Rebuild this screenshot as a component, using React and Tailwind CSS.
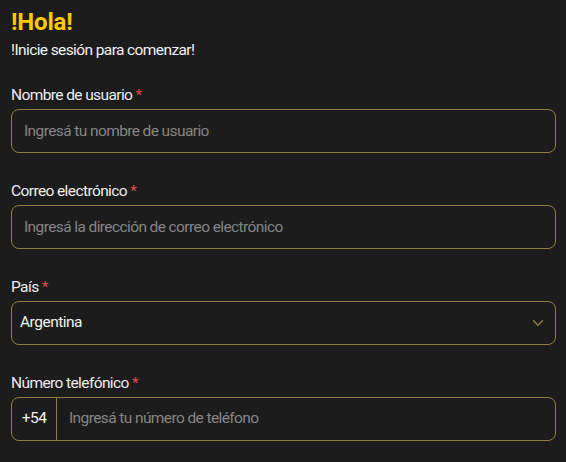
import React, { useState } from 'react';
import { ChevronDown } from 'lucide-react';

const Label = ({ children }) => (
  <label className="block text-[15.5px] leading-[20px] tracking-[-0.6px] text-[#ececec] mb-[4px]">
    {children} <span className="text-[#e5484d]">*</span>
  </label>
);

const inputBox = 'w-full h-[44px] rounded-[8px] border border-[#8c7f3f] bg-transparent';
const field = 'text-[15.5px] tracking-[-0.6px] text-white placeholder:text-[#858585] outline-none';

export default function App() {
  const [country, setCountry] = useState('Argentina');

  return (
    <div className="min-h-[462px] bg-[#1c1c1c] pl-[11px] pr-[10px] pt-[6px] font-['Roboto',sans-serif]">
      <h1 className="text-[24px] leading-[32px] font-bold tracking-[-0.2px] text-[#fcc800]">!Hola!</h1>
      <p className="text-[15.5px] leading-[20px] tracking-[-0.6px] text-[#f2f2f2] mt-[2px]">!Inicie sesión para comenzar!</p>

      <div className="mt-[25px] flex flex-col gap-[28px]">
        <div>
          <Label>Nombre de usuario</Label>
          <input className={`${inputBox} px-[12px] ${field}`} placeholder="Ingresá tu nombre de usuario" />
        </div>

        <div>
          <Label>Correo electrónico</Label>
          <input className={`${inputBox} px-[12px] ${field}`} placeholder="Ingresá la dirección de correo electrónico" />
        </div>

        <div>
          <Label>País</Label>
          <div className={`${inputBox} flex items-center justify-between pl-[8px] pr-[8px]`}>
            <span className="text-[15.5px] tracking-[-0.5px] text-[#f2f2f2]">{country}</span>
            <ChevronDown size={18} strokeWidth={2} className="text-[#8c7f3f]" onClick={() => setCountry(country)} />
          </div>
        </div>

        <div>
          <Label>Número telefónico</Label>
          <div className={`${inputBox} flex items-stretch`}>
            <span className="w-[45px] flex items-center justify-center border-r border-[#8c7f3f] text-[15.5px] tracking-[-0.5px] text-[#f2f2f2]">+54</span>
            <input className={`flex-1 bg-transparent px-[12px] ${field}`} placeholder="Ingresá tu número de teléfono" />
          </div>
        </div>
      </div>
    </div>
  );
}
